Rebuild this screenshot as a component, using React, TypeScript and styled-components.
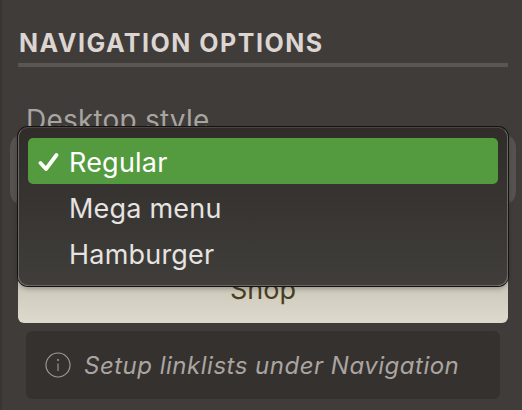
import React from "react";
import styled, { createGlobalStyle } from "styled-components";

const Global = createGlobalStyle`
  html, body { margin: 0; padding: 0; background: #3f3c39; }
  body { width: 522px; height: 410px; overflow: hidden; font-family: Inter, "Noto Sans", sans-serif; }
`;

const Panel = styled.div`
  box-sizing: border-box;
  width: 522px;
  height: 410px;
  padding: 28px 14px 0 18px;
  background: #3f3c39;
  box-shadow: inset 2px 0 0 #383532;
`;

const Heading = styled.h2`
  margin: 0;
  padding: 0 0 5px 1px;
  font-size: 25px;
  line-height: 30px;
  font-weight: 700;
  letter-spacing: 1.5px;
  color: #dcd5d1;
  border-bottom: 4px solid #5a5653;
`;

const Label = styled.div`
  margin: 36px 0 0 8px;
  height: 29px;
  font-size: 28px;
  line-height: 34px;
  letter-spacing: 0.2px;
  color: #a8a4a0;
`;

const SelectArea = styled.div`
  position: relative;
  height: 75px;
  margin: 0 -8px;
`;

const SelectBack = styled.div`
  box-sizing: border-box;
  height: 75px;
  border-radius: 16px;
  background: #3a3734;
  border: 8px solid #55524f;
  border-top-color: #4c4946;
  border-bottom-color: #4c4946;
`;

const Popup = styled.ul`
  position: absolute;
  z-index: 2;
  left: 8px;
  right: 8px;
  top: -5px;
  box-sizing: border-box;
  height: 159px;
  margin: 0;
  padding: 10px 9px;
  list-style: none;
  border-radius: 10px;
  border: 1px solid #6a6865;
  border-top-color: #4a4744;
  background: linear-gradient(180deg, #2f2c2a 0%, #403e3a 100%);
  box-shadow: 0 0 0 1px #141312, 0 3px 5px rgba(0, 0, 0, 0.25);
`;

const Option = styled.li<{ $selected?: boolean }>`
  display: flex;
  align-items: center;
  height: 46px;
  border-radius: 5px;
  padding: 2px 0 0 41px;
  box-sizing: border-box;
  position: relative;
  font-size: 27px;
  letter-spacing: 0.2px;
  color: ${(p) => (p.$selected ? "#ffffff" : "#e6e3e0")};
  background: ${(p) => (p.$selected ? "#539b3e" : "transparent")};
`;

const Check = styled.svg`
  position: absolute;
  left: 10px;
  top: 14px;
  width: 21px;
  height: 20px;
`;

const ShopButton = styled.div`
  box-sizing: border-box;
  height: 108px;
  margin-top: 8px;
  display: flex;
  align-items: flex-end;
  justify-content: center;
  padding-bottom: 16px;
  border-radius: 0 0 6px 6px;
  background: linear-gradient(180deg, #b8b4a6 0%, #c4c0b1 50%, #dedbce 100%);
  font-size: 27px;
  line-height: 34px;
  color: #4a3f22;
`;

const Info = styled.div`
  box-sizing: border-box;
  display: flex;
  align-items: center;
  gap: 13px;
  height: 68px;
  margin: 8px 8px 0 8px;
  padding-left: 19px;
  border-radius: 6px;
  background: #35312e;
  font-size: 24px;
  font-style: italic;
  letter-spacing: 0.5px;
  color: #aaa5a1;
`;

const InfoIcon = styled.svg`
  width: 26px;
  height: 26px;
  flex: none;
`;

export default function App() {
  return (
    <>
      <Global />
      <Panel>
        <Heading>NAVIGATION OPTIONS</Heading>
        <Label>Desktop style</Label>
        <SelectArea>
          <SelectBack />
          <Popup>
            <Option $selected>
              <Check viewBox="0 0 21 20">
                <path d="M2.5 11 L8 17 L18.5 3" fill="none" stroke="#fff" strokeWidth="3.8" strokeLinecap="round" strokeLinejoin="round" />
              </Check>
              Regular
            </Option>
            <Option>Mega menu</Option>
            <Option>Hamburger</Option>
          </Popup>
        </SelectArea>
        <ShopButton>Shop</ShopButton>
        <Info>
          <InfoIcon viewBox="0 0 26 26">
            <circle cx="13" cy="13" r="12" fill="none" stroke="#a09c98" strokeWidth="1.1" />
            <circle cx="13" cy="8" r="1" fill="#a09c98" />
            <path d="M13 11.5 V19" stroke="#a09c98" strokeWidth="1.1" />
          </InfoIcon>
          Setup linklists under Navigation
        </Info>
      </Panel>
    </>
  );
}
